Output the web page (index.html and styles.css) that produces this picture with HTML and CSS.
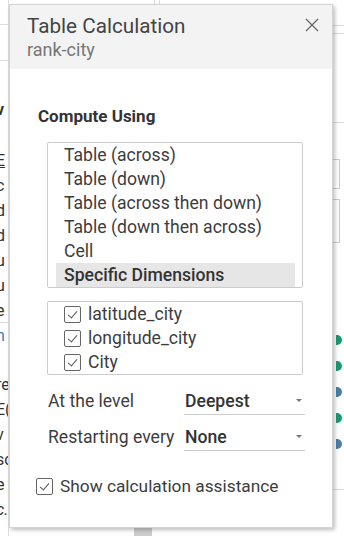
FILE: index.html
```html
<!DOCTYPE html>
<html lang="en">
<head>
    <meta charset="UTF-8">
    <meta name="viewport" content="width=device-width, initial-scale=1.0">
    <link rel="stylesheet" href="styles.css">
    <title>Table Calculation</title>
</head>
<body>
    <div class="workspace">
        <div class="side-left">
            <div class="rule"></div>
            <div class="rule second"></div>
            <div class="frag bold first">v</div>
            <div class="frag under">E</div>
            <div class="frag">c</div>
            <div class="frag">d</div>
            <div class="frag">d</div>
            <div class="frag">u</div>
            <div class="frag">u</div>
            <div class="frag lined">e</div>
            <div class="frag blue">n</div>
            <div class="frag gap">re</div>
            <div class="frag">E(</div>
            <div class="frag">v</div>
            <div class="frag">sc</div>
            <div class="frag">e</div>
            <div class="frag italic">c.</div>
        </div>
        <div class="middle">
            <div class="divider"></div>
            <div class="scroll-thumb"></div>
        </div>
        <div class="side-right">
            <div class="rule top"></div>
            <div class="rule"></div>
            <div class="rule mid"></div>
            <div class="box one"></div>
            <div class="box two"></div>
            <div class="dots">
                <span class="dot green"></span>
                <span class="dot green"></span>
                <span class="dot blue"></span>
                <span class="dot green"></span>
                <span class="dot blue"></span>
            </div>
            <div class="rule low"></div>
        </div>
    </div>

    <div class="dialog">
        <div class="dialog-head">
            <div class="title">Table Calculation</div>
            <div class="subtitle">rank-city</div>
            <svg class="close" width="14" height="14" viewBox="0 0 14 14">
                <path d="M1 1 L13 13 M13 1 L1 13" stroke="#666" stroke-width="1.3" fill="none"/>
            </svg>
        </div>
        <div class="dialog-body">
            <h3>Compute Using</h3>
            <ul class="list-box">
                <li>Table (across)</li>
                <li>Table (down)</li>
                <li>Table (across then down)</li>
                <li>Table (down then across)</li>
                <li>Cell</li>
                <li class="selected">Specific Dimensions</li>
            </ul>
            <ul class="list-box dims">
                <li><span class="check"></span>latitude_city</li>
                <li><span class="check"></span>longitude_city</li>
                <li><span class="check"></span>City</li>
            </ul>
            <div class="field">
                <span class="field-label">At the level</span>
                <div class="select"><span>Deepest</span><span class="caret"></span></div>
            </div>
            <div class="field">
                <span class="field-label">Restarting every</span>
                <div class="select"><span>None</span><span class="caret"></span></div>
            </div>
            <label class="assist"><span class="check"></span>Show calculation assistance</label>
        </div>
    </div>
</body>
</html>
```
FILE: styles.css
```css
* {
    box-sizing: border-box;
}

body {
    margin: 0;
    width: 344px;
    height: 536px;
    overflow: hidden;
    background: #fff;
    font-family: Roboto, "Open Sans", sans-serif;
    color: #333;
    position: relative;
}

.workspace {
    display: flex;
    height: 536px;
}

.side-left {
    width: 9px;
    overflow: hidden;
    white-space: nowrap;
    border-right: 1px solid #ddd;
    font-size: 16px;
    color: #333;
}

.side-left .rule {
    height: 1px;
    background: #ddd;
    margin-top: 24px;
}

.side-left .rule.second {
    margin-top: 35px;
}

.frag {
    height: 25px;
    line-height: 25px;
    margin-left: -4px;
}

.frag.first {
    margin-top: 36px;
    margin-bottom: 26px;
}

.frag.bold {
    font-weight: bold;
}

.frag.under {
    text-decoration: underline;
}

.frag.lined {
    border-bottom: 1px solid #ddd;
}

.frag.blue {
    color: #3a7cc0;
}

.frag.gap {
    margin-top: 24px;
}

.frag.italic {
    font-style: italic;
}

.middle {
    flex: 1;
    position: relative;
}

.divider {
    margin-left: 145px;
    width: 6px;
    height: 6px;
    border-left: 1px solid #ddd;
    border-right: 1px solid #ddd;
}

.scroll-thumb {
    position: absolute;
    left: 125px;
    bottom: 0;
    width: 18px;
    height: 8px;
    background: #ccc;
}

.side-right {
    width: 11px;
    position: relative;
}

.side-right .rule {
    height: 1px;
    background: #ddd;
}

.side-right .rule.top {
    margin-top: 25px;
    margin-bottom: 7px;
}

.side-right .rule.mid {
    margin-top: 88px;
}

.side-right .box {
    border: 1px solid #ccc;
    border-left: none;
    width: 7px;
}

.side-right .box.one {
    margin-top: 36px;
    height: 30px;
}

.side-right .box.two {
    margin-top: 10px;
    height: 44px;
}

.dots {
    display: flex;
    flex-direction: column;
    gap: 16px;
    margin-top: 92px;
}

.dot {
    display: block;
    width: 6px;
    height: 10px;
    border-radius: 0 5px 5px 0;
    margin-left: 3px;
}

.dot.green {
    background: #1a9a6c;
}

.dot.blue {
    background: #4a7ea6;
}

.side-right .rule.low {
    margin-top: 40px;
}

/* popup */
.dialog {
    position: absolute;
    left: 9px;
    top: 4px;
    width: 324px;
    height: 524px;
    background: #fff;
    border: 1px solid #d4d4d4;
    box-shadow: 2px 2px 4px rgba(0, 0, 0, 0.25);
}

.dialog-head {
    position: relative;
    background: #f3f3f3;
    height: 64px;
    padding: 9px 0 0 17px;
}

.title {
    font-size: 20.7px;
    color: #444;
    line-height: 25px;
}

.subtitle {
    font-size: 18px;
    color: #777;
    line-height: 21px;
}

.close {
    position: absolute;
    right: 13px;
    top: 13px;
}

.dialog-body {
    padding: 35px 0 0 28px;
}

.dialog-body h3 {
    margin: 0 0 14px 0;
    font-size: 17px;
    font-weight: bold;
    color: #333;
    line-height: 24px;
}

.list-box {
    list-style: none;
    margin: 0 0 13px 9px;
    padding: 0 7px 0 8px;
    width: 256px;
    border: 1px solid #ccc;
    border-radius: 2px;
    font-size: 17.6px;
    color: #3d3d3d;
}

.list-box li {
    height: 24px;
    line-height: 24px;
    padding-left: 8px;
    white-space: nowrap;
}

.list-box li.selected {
    background: #e6e6e6;
    font-weight: 500;
    color: #333;
}

.list-box.dims li {
    display: flex;
    align-items: center;
}

.check {
    display: inline-block;
    width: 17px;
    height: 17px;
    border: 1px solid #666;
    border-radius: 2px;
    margin-right: 7px;
    position: relative;
    flex: none;
}

.check::after {
    content: "";
    position: absolute;
    left: 5px;
    top: 2px;
    width: 4px;
    height: 8px;
    border-right: 1.3px solid #555;
    border-bottom: 1.3px solid #555;
    transform: rotate(40deg);
}

.field {
    display: flex;
    align-items: center;
    margin: -5px 0 5px 10px;
    height: 36px;
    font-size: 17.6px;
}

.field-label {
    width: 136px;
    color: #3d3d3d;
    white-space: nowrap;
}

.select {
    width: 121px;
    height: 28px;
    border-bottom: 1px solid #ccc;
    display: flex;
    align-items: center;
    justify-content: space-between;
    font-weight: 500;
    color: #333;
    padding-left: 1px;
    padding-right: 3px;
}

.caret {
    width: 0;
    height: 0;
    border-left: 3px solid transparent;
    border-right: 3px solid transparent;
    border-top: 3px solid #777;
}

.assist {
    display: flex;
    align-items: center;
    margin: 21px 0 0 -2px;
    font-size: 17.3px;
    color: #3d3d3d;
}
```
